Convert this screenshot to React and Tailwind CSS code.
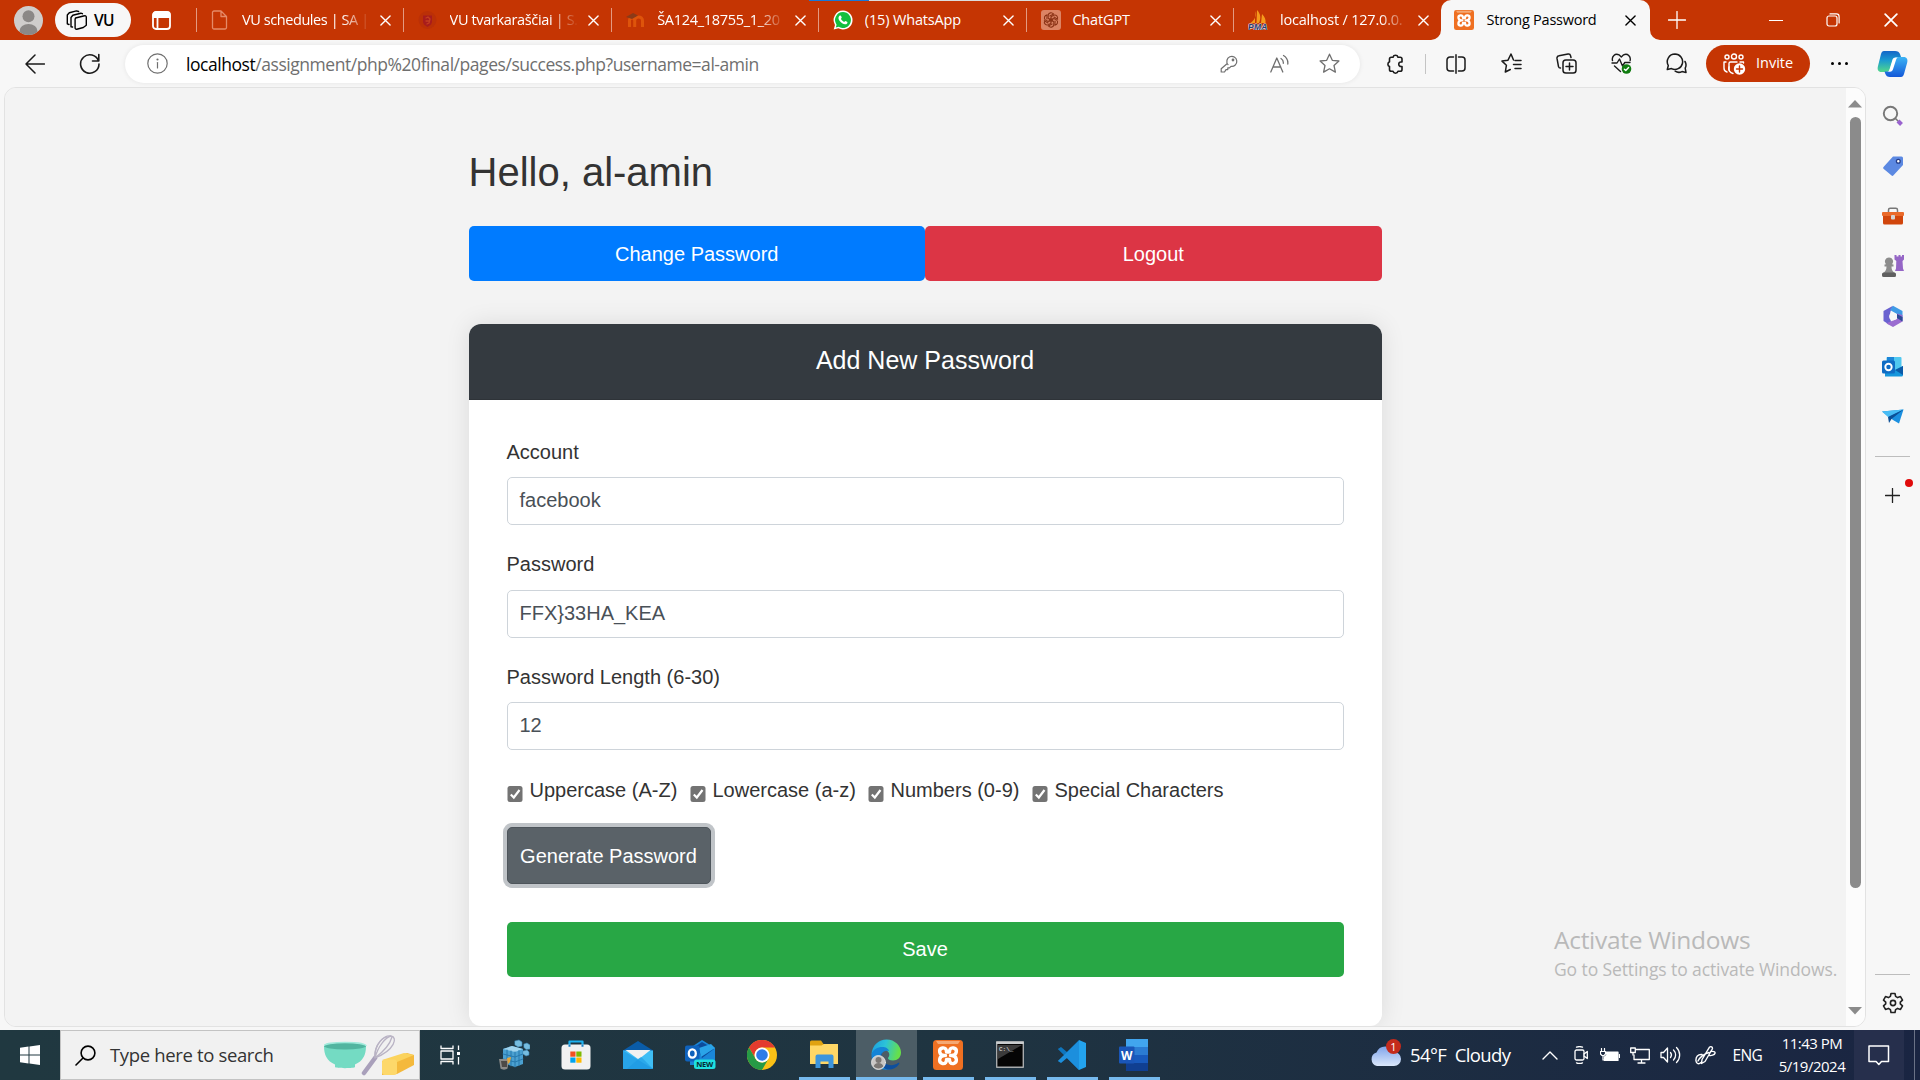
import React from "react";

const UI = "font-['Open_Sans','Noto_Sans',sans-serif]";

/* Generic inline drawing */
function Ico({ w = 20, h = w, vb, children, className = "", sw = 1.3 }) {
  return (
    <svg
      width={w}
      height={h}
      viewBox={vb || `0 0 ${w} ${h}`}
      fill="none"
      stroke="currentColor"
      strokeWidth={sw}
      strokeLinecap="round"
      strokeLinejoin="round"
      className={`shrink-0 ${className}`}
    >
      {children}
    </svg>
  );
}

/* ---------- Tab strip ---------- */
const PageIcon = () => (
  <Ico w={17} h={20} className="text-[#e58a68]">
    <path d="M1.5 2.5a1.5 1.5 0 0 1 1.5-1.5h7l5.5 5.5v11a1.5 1.5 0 0 1-1.5 1.5h-11a1.5 1.5 0 0 1-1.5-1.5zM10 1v5.5h5.500" />
  </Ico>
);
const ShieldIcon = () => (
  <Ico w={19} h={20} className="text-[#b02c10]">
    <circle cx="9.500" cy="10" r="9" fill="#bb3007" stroke="none" />
    <path d="M5 5.500h9v6c0 2.500-2 4-4.500 5.500-2.500-1.500-4.500-3-4.500-5.500z" fill="#a81c1c" stroke="none" />
    <path d="M8 8l2-1 2 2-1 4-2 1M8 11h3" stroke="#c43e20" />
  </Ico>
);
const MoodleIcon = () => (
  <Ico w={19} h={20}>
    <path d="M3.500 17v-6.500a2.600 2.600 0 0 1 5.200 0V17M8.700 10.500a3.800 3.500 0 0 1 7.800 0V17" stroke="#de540b" strokeWidth="3" strokeLinecap="butt" />
    <path d="M0 7l7-4 5 2.500-6 3.500z" fill="#8a3a18" stroke="none" />
  </Ico>
);
const WhatsAppIcon = () => (
  <Ico w={20} h={20}>
    <path d="M10 .5a9.500 9.500 0 1 1-4.600 17.800L.7 19.500l1.300-4.600A9.500 9.500 0 0 1 10 .5z" fill="#fff" stroke="none" />
    <path d="M10 2a8 8 0 1 1-4.300 14.800l-2.900.8.8-2.900A8 8 0 0 1 10 2z" fill="#12bf3f" stroke="none" />
    <path d="M6.800 5.600c.7-.4 1.200 0 1.400.6l.5 1.200c.1.500-.6 1-.8 1.400.6 1.400 1.700 2.500 3.200 3.100.4-.2.9-1.100 1.400-1l1.500.8c.7.400.5 1.200.1 1.700-1.200 1.500-3.300 1-5-.1-1.600-1-3-2.500-3.500-4.200-.3-1.500.1-2.800 1.200-3.500z" fill="#fff" stroke="none" />
  </Ico>
);
const Knot = ({ color }) => (
  <g stroke={color} strokeWidth="1.100" fill="none">
    {[0, 60, 120, 180, 240, 300].map((a) => (
      <path key={a} transform={`rotate(${a} 10 10)`} d="M7.200 8.300V5.400a2.800 2.800 0 0 1 5.200-1.200M7.200 8.300l4.500 2.500M8.900 5.900l3.800-2" />
    ))}
  </g>
);
const ChatGptIcon = () => (
  <Ico w={20} h={20}>
    <rect width="20" height="20" rx="3" fill="#dc8464" stroke="none" />
    <Knot color="#8c3417" />
  </Ico>
);
const PmaIcon = () => (
  <Ico w={20} h={20}>
    <path d="M7 1c1 4 1 8-4.500 12H7zM9 0c4 4 4 9 2 13H8.500zM14 4c3 3 4 6 3.500 9H13z" fill="#f59a1c" stroke="none" />
    <text x="0" y="19.500" fontSize="8.500" fontWeight="700" fontStyle="italic" fontFamily="Liberation Sans" textLength="19.500" fill="#2d3a72" stroke="#e3d3cf" strokeWidth="1.200" paintOrder="stroke">PMA</text>
  </Ico>
);
const XamppIcon = ({ w = 20, h = 20 }) => (
  <Ico w={w} h={h} vb="0 0 30 30">
    <rect width="30" height="30" rx="3.500" fill="#ef7022" stroke="none" />
    <path d="M3 1h24l-2 3H5z" fill="#f5a873" stroke="none" />
    <path d="M12.500 15.500H11c-5-.5-6-6.500-1.500-7.500 3-.5 4 1.500 4 4h3c0-2.500 1-4.500 4-4 4.500 1 3.500 7-1.500 7.500 5 .5 6 7 1.500 8-3 .5-4-1.500-4-4h-3c0 2.500-1 4.500-4 4-4.500-1-3.500-7.500 1.500-8M17.500 15.500H19" stroke="#fff" strokeWidth="3.400" />
  </Ico>
);
const Cross = ({ s = 11, className = "" }) => (
  <Ico w={s} vb="0 0 12 12" className={className} sw={1.500}>
    <path d="M1 1l10 10M11 1L1 11" />
  </Ico>
);

const TABS = [
  { icon: <PageIcon />, title: "VU schedules | SA |", fade: true, cls: "tracking-[-0.42px]" },
  { icon: <ShieldIcon />, title: "VU tvarkaraščiai | S.", fade: true, cls: "tracking-[-0.35px]" },
  { icon: <MoodleIcon />, title: "ŠA124_18755_1_20", fade: true, cls: "tracking-[-0.3px]" },
  { icon: <WhatsAppIcon />, title: "(15) WhatsApp", cls: "tracking-[-0.15px]" },
  { icon: <ChatGptIcon />, title: "ChatGPT", cls: "tracking-[-0.15px]" },
  { icon: <PmaIcon />, title: "localhost / 127.0.0.", fade: true, cls: "tracking-[-0.2px]" },
];

function TabStrip() {
  return (
    <div className="relative flex h-10 shrink-0 items-center bg-[#c53503] text-white">
      <svg width="29" height="29" viewBox="0 0 29 29" className="ml-[13.500px] shrink-0">
        <defs><clipPath id="av"><circle cx="14.500" cy="14.500" r="14.500" /></clipPath></defs>
        <g clipPath="url(#av)">
          <rect width="29" height="29" fill="#cfcdcb" />
          <circle cx="14.500" cy="10.300" r="6" fill="#8b8886" />
          <ellipse cx="14.500" cy="25" rx="9" ry="7" fill="#8b8886" />
        </g>
      </svg>
      <div className="ml-[12.500px] flex h-[34px] w-[75.500px] shrink-0 items-center rounded-full bg-[#f7f7f7] pl-[11px] text-black">
        <Ico w={22} h={20} sw={1.400}>
          <path d="M9.500 8l9-2.200a1.300 1.300 0 0 1 1.800 1.300v8.200l-3 2.200-6.500 1.700a1.300 1.300 0 0 1-1.700-1.300V9.300z" />
          <path d="M6.500 17l-1.500-.3V7.500l1.800-2.200 8-2.100 1.600.5" />
          <path d="M3 14.500l-1.700-.7V5l2-2.300L10.500.9l2.100.6" />
        </Ico>
        <span className="ml-[6px] text-[15.500px] font-semibold leading-5 tracking-[-0.6px]">VU</span>
      </div>
      <Ico w={19} h={19} className="ml-[21px]" sw={1.800}>
        <rect x="1" y="1" width="17" height="17" rx="3" />
        <path d="M1.500 3.500a2 2 0 0 1 2-2h12a2 2 0 0 1 2 2V6h-16z" fill="currentColor" />
        <path d="M5.500 6v12" />
      </Ico>
      <div className="ml-[25px] flex">
        {TABS.map((t) => (
          <div key={t.title} className="flex h-6 w-[207.600px] items-center border-l border-[#e39a81] pl-[14px]">
            <div className="flex w-[31.500px] shrink-0">{t.icon}</div>
            <div className={`w-[128px] overflow-hidden whitespace-nowrap text-[14.500px] leading-5 ${t.cls} ${t.fade ? "[mask-image:linear-gradient(90deg,#000_78%,transparent)]" : ""}`}>
              {t.title}
            </div>
            <Cross className="ml-[10px]" />
          </div>
        ))}
      </div>
      <div className="relative flex h-10 w-[209px] shrink-0 items-center rounded-t-[10px] bg-[#f7f7f7] pl-[13px] text-black">
        <svg width="10" height="10" className="absolute bottom-0 -left-[10px]"><path d="M10 0v10H0A10 10 0 0 0 10 0z" fill="#f7f7f7" /></svg>
        <svg width="10" height="10" className="absolute bottom-0 -right-[10px]"><path d="M0 0v10h10A10 10 0 0 1 0 0z" fill="#f7f7f7" /></svg>
        <XamppIcon />
        <span className="ml-[12.500px] w-[128px] whitespace-nowrap text-[14.500px] leading-5 tracking-[-0.25px]">Strong Password</span>
        <Cross className="ml-[10px]" />
      </div>
      <Ico w={18} className="ml-[17.500px]" sw={1.300}><path d="M9 .5v17M.5 9h17" /></Ico>
      <Ico w={14} className="ml-[83.500px]" sw={1.200}><path d="M.5 7.500h13" /></Ico>
      <Ico w={14} className="ml-[42.500px]" sw={1.200}>
        <rect x="1" y="3" width="10" height="10" rx="2" />
        <path d="M4 .9h6.500A2.600 2.600 0 0 1 13.100 3.500V10" />
      </Ico>
      <Cross s={14} className="ml-[44px]" />
      <div className="absolute left-[809px] top-0 flex h-px">
        <div className="w-[60px] bg-[#1877d8]" />
        <div className="w-[241px] bg-[#dcdcdc]" />
      </div>
    </div>
  );
}

/* ---------- Address bar ---------- */
function Toolbar() {
  return (
    <div className="flex h-[47px] shrink-0 items-center bg-[#f7f7f7] text-[#1b1b1b]">
      <Ico w={20} className="ml-[25px]" sw={1.500}><path d="M10 1L1 10l9 9M1 10h18.500" /></Ico>
      <Ico w={22} className="ml-[34px]" sw={1.600}>
        <path d="M19.500 8A9.200 9.200 0 1 0 20 11M19.800 1.500V8h-6.300" />
      </Ico>
      <div className="ml-6 flex h-[38px] w-[1235px] shrink-0 items-center rounded-full bg-white pl-[22px] text-[#6f6f6f] shadow-[0_0_5px_rgba(0,0,0,0.08)]">
        <Ico w={21} sw={1.200}><circle cx="10.500" cy="10.500" r="9.700" /><path d="M10.500 9.500v5.500" /><circle cx="10.500" cy="6.500" r=".5" fill="currentColor" /></Ico>
        <span className="ml-[18px] w-[1034px] shrink-0 whitespace-nowrap text-[17.500px] leading-6 tracking-[-0.45px]">
          <span className="text-black">localhost</span>/assignment/php%20final/pages/success.php?username=al-amin
        </span>
        <Ico w={18} sw={1.200}>
          <path d="M8 9.600a5 5 0 1 1 3 1.700L9.500 12.800H7.800v1.800H6L4.500 17H1.200v-3.200L7.300 8.500" />
          <circle cx="13" cy="5" r=".8" fill="currentColor" />
        </Ico>
        <Ico w={19} h={20} className="ml-[32px]" sw={1.300}>
          <path d="M.8 18L6.800 4l6 14M3 13h7.800M11 4.500a5 5 0 0 1 2.300 4.800M13.500 1.500a9 9 0 0 1 4.300 8.500" />
        </Ico>
        <Ico w={21} className="ml-[29.500px]" sw={1.300}>
          <path d="M10.500 1.200l2.800 6.100 6.600.7-4.900 4.500 1.400 6.600-5.900-3.300-5.900 3.300L6 12.500 1.100 8l6.600-.7z" />
        </Ico>
      </div>
      <Ico w={20} className="ml-[25px]" sw={1.600}>
        <path d="M4.500 5A1.800 1.800 0 0 1 6.300 3.200H8a2.600 2.600 0 0 1 5 0h2.200A1.800 1.800 0 0 1 17 5v3h-1a2 2 0 0 0 0 4.500h1v3a1.800 1.800 0 0 1-1.800 1.800H13a2.600 2.600 0 0 1-5 0H6.300a1.800 1.800 0 0 1-1.800-1.800V12.600a2.600 2.600 0 0 1 0-4.800z" />
      </Ico>
      <div className="ml-[20px] h-5 w-px bg-[#c4c4c4]" />
      <Ico w={20} className="ml-[20px]" sw={1.500}>
        <path d="M7.500 3H4a3 3 0 0 0-3 3v8a3 3 0 0 0 3 3h3.500M12.500 3H16a3 3 0 0 1 3 3v8a3 3 0 0 1-3 3h-3.500M10 .8v18.400" />
      </Ico>
      <Ico w={21} className="ml-[35px]" sw={1.500}>
        <path d="M12.500 7L10 1 7 7.200l-6 .9 4.400 4.200L4.300 19l5-2.500M14 7.500h6M12.500 11.500H20M14 15.500h6" />
      </Ico>
      <Ico w={21} className="ml-[34px]" sw={1.500}>
        <rect x="7" y="7" width="13" height="13" rx="2.800" />
        <path d="M13.500 10v7M10 13.500h7M15 4.500l-.4-1.700A2.300 2.300 0 0 0 12 1L3 2.800A2.300 2.300 0 0 0 1 5.400l1.500 8.200A2 2 0 0 0 4.500 15" />
      </Ico>
      <Ico w={21} className="ml-[34px]" sw={1.400}>
        <path d="M1.500 7.500C.5 3.500 4-.2 8 1.800L10.300 4l2.300-2.200c4-2 7.500 1.700 6.500 5.700M1 10h5l2.500-4 3 7 2.300-3.500H19M3.500 13l6 5.500" />
        <circle cx="15.500" cy="16" r="4.800" fill="#107c10" stroke="none" />
        <path d="M13.400 16.200l1.400 1.400 2.800-3" stroke="#fff" />
      </Ico>
      <Ico w={21} className="ml-[34px]" sw={1.500}>
        <path d="M9 1a7.700 7.700 0 1 1-3.500 14.600L1.300 16.500l1-4A7.700 7.700 0 0 1 9 1z" />
        <path d="M19 8.500c1.400 2.300 1.300 4.500.2 6.700l.8 4.300-4-.9c-2.500 1.200-5 .8-6.800-.4" />
      </Ico>
      <div className="ml-[19px] flex h-[37px] w-[104px] shrink-0 items-center rounded-full bg-[#c53503] pl-[17px] text-white">
        <Ico w={23} h={22} sw={1.400}>
          <circle cx="4" cy="4" r="2" /><circle cx="11" cy="3.500" r="2.500" /><circle cx="18" cy="4" r="2" />
          <path d="M1 9v6a4 4 0 0 0 3 4M6 17V10.500A1.500 1.500 0 0 1 7.500 9h6.500M17 9h3.500v1M1 9h2" />
          <path d="M6 14a5 5 0 0 0 4 6.500" />
          <circle cx="16.500" cy="16" r="5.700" fill="#fff" stroke="none" />
          <path d="M16.500 13v6M13.500 16h6" stroke="#c53503" />
        </Ico>
        <span className="ml-[10px] -mt-px text-[14.500px] leading-5">Invite</span>
      </div>
      <div className="ml-[21px] flex w-[17px] shrink-0 justify-between">
        {[0, 1, 2].map((i) => <span key={i} className="h-[3px] w-[3px] rounded-full bg-black" />)}
      </div>
      <svg width="31" height="28" viewBox="0 0 31 28" className="ml-[29px] shrink-0">
        <defs>
          <linearGradient id="cpA" x1="0" y1="0" x2="0" y2="1"><stop offset="0" stopColor="#1466c8" /><stop offset=".45" stopColor="#1b9bd0" /><stop offset="1" stopColor="#52d88a" /></linearGradient>
          <linearGradient id="cpB" x1="0" y1="0" x2="0" y2="1"><stop offset="0" stopColor="#3cb4f5" /><stop offset="1" stopColor="#1458d8" /></linearGradient>
        </defs>
        <path d="M7 1h11c2.500 0 4.500 1 5.200 3.500l1.300 4h-5c-2 0-3.500 1-4 3l-2.500 7.500c-.6 2-2 3-4 3H4.500C1 22 0 19.500 1 16L4 4C4.600 2 5.500 1 7 1z" fill="url(#cpA)" />
        <path d="M24 27H13c-2.500 0-4-1-4.800-3.500L7.500 21.500H10c2 0 3-1 3.500-3L16 10.500c.6-2 2-3.500 4-3.500h6.500c3.500 0 4.500 2.500 3.700 5.500L27 24c-.6 2-1.500 3-3 3z" fill="url(#cpB)" />
        <path d="M15.500 9.500l-3 10c-.4 1.300-1 2-2 2.200H13c1.800 0 2.500-1 3-2.500L19 10c.3-1 .8-2 1.800-2.500h-2.300c-1.500 0-2.500.7-3 2z" fill="#fff" />
      </svg>
    </div>
  );
}

/* ---------- Web page ---------- */
const Field = ({ label, value }) => (
  <div className="h-[112.500px]">
    <div className="h-[30px] text-[20px] leading-[28px]">{label}</div>
    <div className="mt-[9.500px] h-[48px] rounded-[5px] border border-[#ced4da] bg-white px-[12px] text-[20px] leading-[44px] text-[#495057]">{value}</div>
  </div>
);

const Check = ({ label, className }) => (
  <div className={`flex shrink-0 ${className}`}>
    <svg width="16" height="16" viewBox="0 0 16 16" className="mt-[11px] shrink-0">
      <rect x=".5" y="0" width="15" height="16" rx="2.500" fill="#737373" />
      <path d="M3.800 8.500l3 3 5.700-7.500" fill="none" stroke="#fff" strokeWidth="2.200" />
    </svg>
    <span className="ml-[7px] whitespace-nowrap">{label}</span>
  </div>
);

function Page() {
  return (
    <div className="flex min-w-0 flex-1 justify-center bg-[#f3f3f3] pt-[60px] font-['Liberation_Sans',Arial,sans-serif] text-[#333]">
      <div className="mr-px flex w-[913px] flex-col">
        <h1 className="text-[40px] font-normal leading-[48px]">Hello, al-amin</h1>
        <div className="mt-[30px] flex h-[55px] text-center text-[20px] leading-[56px] text-white">
          <div className="flex-1 rounded-[5px] bg-[#007bff]">Change Password</div>
          <div className="flex-1 rounded-[5px] bg-[#dc3545]">Logout</div>
        </div>
        <div className="mt-[43px] h-[702px] overflow-hidden rounded-[12px] bg-white shadow-[0_0_25px_rgba(0,0,0,0.1)]">
          <div className="h-[76px] border-b border-[#2e3338] bg-[#343a40] pt-[21px] text-center text-[25px] leading-[30px] text-white">Add New Password</div>
          <div className="px-[38px] pt-[37.500px]">
            <Field label="Account" value="facebook" />
            <Field label="Password" value="FFX}33HA_KEA" />
            <Field label="Password Length (6-30)" value="12" />
            <div className="flex h-[30px] text-[20px] leading-[30px]">
              <Check label="Uppercase (A-Z)" className="w-[183px]" />
              <Check label="Lowercase (a-z)" className="w-[178px]" />
              <Check label="Numbers (0-9)" className="w-[164px]" />
              <Check label="Special Characters" className="" />
            </div>
            <div className="mt-[22px] h-[57px] w-[204px] rounded-[5px] border border-[#4e555b] bg-[#5a6268] text-center text-[20px] leading-[56px] text-white shadow-[0_0_0_4px_rgba(130,138,145,0.5)]">Generate Password</div>
            <div className="mt-[38px] h-[55px] rounded-[5px] bg-[#28a745] text-center text-[20px] leading-[54px] text-white">Save</div>
          </div>
        </div>
      </div>
    </div>
  );
}

function Scrollbar() {
  return (
    <div className="flex w-[19px] shrink-0 flex-col items-center bg-[#fcfcfc] pr-px">
      <svg width="14" height="8" className="mt-[12px] shrink-0"><path d="M7 0l7 7.500H0z" fill="#8b8b8b" /></svg>
      <div className="mt-[9px] h-[771px] w-[11px] shrink-0 rounded-full bg-[#8b8b8b]" />
      <svg width="14" height="8" className="mt-[119px] shrink-0"><path d="M7 7.500L0 0h14z" fill="#8b8b8b" /></svg>
    </div>
  );
}

function Sidebar() {
  const slot = "flex h-[50px] w-full items-center justify-center";
  return (
    <div className="flex w-[53px] shrink-0 flex-col items-center text-[#222]">
      <div className={`${slot} mt-[4px]`}>
        <Ico w={22}>
          <circle cx="8.500" cy="8.500" r="6.700" stroke="#777" strokeWidth="1.900" />
          <path d="M13.500 13.500l2.500 2.500" stroke="#777" strokeWidth="1.500" />
          <path d="M16 16l3.500 3.500" stroke="#9a63cf" strokeWidth="4" strokeLinecap="butt" />
        </Ico>
      </div>
      <div className={slot}>
        <Ico w={22}>
          <path d="M1.500 12L11 1.500h8.500A1.500 1.500 0 0 1 21 3v7L11.500 20.300a1.500 1.500 0 0 1-2.200 0l-7.800-6.500a1.300 1.300 0 0 1 0-1.800z" fill="#5c89e2" stroke="none" />
          <circle cx="16.300" cy="6.200" r="1.900" fill="#fff" stroke="#243c88" strokeWidth="1.300" />
        </Ico>
      </div>
      <div className={slot}>
        <Ico w={22} h={18}>
          <path d="M6.500 5V3A1.700 1.700 0 0 1 8.200 1.300h5.600A1.700 1.700 0 0 1 15.500 3v2" stroke="#777" strokeWidth="1.500" />
          <rect x="1" y="6" width="20" height="11.500" rx="1.500" fill="#d1460c" stroke="none" />
          <rect x="0" y="5" width="22" height="4" rx="1" fill="#ea6a2a" stroke="none" />
          <rect x="9" y="8" width="4" height="4.500" rx="1" fill="#d4d4d4" stroke="none" />
        </Ico>
      </div>
      <div className={slot}>
        <Ico w={22} h={22}>
          <path d="M12.500 0h2v1.500h2V0h2v1.500h1.500V0h2v4.500L20.500 6l.5 7.500 1 2.500h-9l1-2.500.3-7.500-1.800-1.500z" fill="#9566c6" stroke="none" />
          <path d="M7 2.500a4 4 0 0 1 3 6.700l1.500.3v2h-2c0 3 .8 4.500 2.500 6 2.500.500 2.500 4 1 4.500H1.200c-2-.5-1.500-4 .8-4.500 1.700-1.500 2.500-3 2.500-6h-2v-2L4 9.200A4 4 0 0 1 7 2.500z" fill="#8c8c8c" stroke="none" />
          <rect x="0" y="17.500" width="14" height="4.500" rx="2" fill="#606060" stroke="none" />
        </Ico>
      </div>
      <div className={slot}>
        <Ico w={22} h={23}>
          <path d="M11 .8L1.500 6v10l5.500 3.500 2-3-1.500-5 1-5z" fill="#6a62d0" stroke="none" />
          <path d="M11 .8L20.500 6v10L15 13V9L8 5z" fill="#3f9be6" stroke="none" />
          <path d="M15 8.500V14l-9 3.500L4.500 18.500 11 22l9.500-5.500V10z" fill="#9a6cd0" stroke="none" />
          <path d="M15 9l5.500 3v4.500L15 13z" fill="#2e4a96" stroke="none" />
          <circle cx="11" cy="11.500" r="3.800" fill="#f7f7f7" stroke="none" />
        </Ico>
      </div>
      <div className={slot}>
        <Ico w={21} h={21}>
          <rect x="4.500" y="1" width="15" height="18" rx="1" fill="#50c8f0" stroke="none" />
          <rect x="5" y="1" width="7" height="6" fill="#1c86d8" stroke="none" />
          <path d="M3 20.500V12l8 3 10-5v9a1.500 1.500 0 0 1-1.500 1.500z" fill="#1596dc" stroke="none" />
          <path d="M13 14l8-4v9z" fill="#0a5aa8" stroke="none" />
          <rect x="0" y="4.500" width="13" height="13" rx="1.500" fill="#0f6cc4" stroke="none" />
          <circle cx="6.500" cy="11" r="3.200" stroke="#fff" strokeWidth="1.900" />
        </Ico>
      </div>
      <div className={`${slot} pt-[2px]`}>
        <Ico w={22} h={16}>
          <path d="M0 2.500L21.500.5 17 14.500l-6-3.500z" fill="#1a8fe0" stroke="none" />
          <path d="M0 2.500L21.500.5 6 8z" fill="#49bdf5" stroke="none" />
          <path d="M6 8L21.500.5 9.500 10 7 14z" fill="#0c4f96" stroke="none" />
        </Ico>
      </div>
      <div className="mt-[15px] h-px w-[35px] shrink-0 bg-[#bdbdbd]" />
      <div className="relative mt-[31px]">
        <Ico w={15} sw={1.300}><path d="M7.500.5v14M.5 7.500h14" /></Ico>
        <span className="absolute -top-[9px] left-[20px] h-2 w-2 rounded-full bg-[#e00b0b]" />
      </div>
      <div className="mt-auto h-px w-[35px] shrink-0 bg-[#bdbdbd]" />
      <Ico w={22} className="mb-[16px] mt-[17px]" vb="0 0 22 22" sw={1.600}>
        <path d="M9 1.500h4l.6 2.900 2 1.200 2.900-1 2 3.500-2.200 2v1.800l2.200 2-2 3.500-2.900-1-2 1.200-.6 2.900H9l-.6-2.900-2-1.200-2.900 1-2-3.500 2.200-2v-1.800l-2.200-2 2-3.500 2.900 1 2-1.200z" />
        <circle cx="11" cy="11" r="2.600" />
      </Ico>
    </div>
  );
}

/* ---------- Taskbar ---------- */
const RegIcon = () => (
  <Ico w={31} h={31}>
    <path d="M4 10l9-3 11 3v15l-8 3-12-4z" fill="#4aa0d0" stroke="none" />
    <path d="M4 10l9-3 11 3-8 3z" fill="#9fd4ee" stroke="none" />
    <path d="M4 15l12 3 8-3M4 20l12 3 8-3M8 11v14M12 12v15M16 13v15M20 11.500v15" stroke="#2474a8" strokeWidth=".9" />
    <path d="M16 2l4-1 3 2v4l-4 1-3-2zM25 5l3-1 3 2v4l-4 .5-2-2zM24 12l4-1 2 2v3l-3 1-3-2z" fill="#76bde0" stroke="#3c86b4" strokeWidth=".6" />
    <path d="M0 20h10l-1.500 9.500c-1.500 1.500-5.500 1.500-7 0z" fill="#8b8b88" stroke="none" />
    <path d="M2 22h6v6H3z" fill="#4d4a46" stroke="none" />
    <path d="M8 19l4-1-1 5-2 2z" fill="#e4a73b" stroke="none" />
  </Ico>
);
const StoreIcon = () => (
  <Ico w={30} h={30}>
    <path d="M8.500 7V1.500h13V7" stroke="#1db2f0" strokeWidth="2.200" strokeLinecap="butt" />
    <rect x=".5" y="4.500" width="29" height="25" rx="3.500" fill="#f1f1f1" stroke="none" />
    <path d="M8.500 4.500v2.200M21.500 4.500v2.200" stroke="#1580c8" strokeWidth="2" strokeLinecap="butt" />
    <g stroke="none"><rect x="9.300" y="11.500" width="5.200" height="5.200" fill="#f25022" /><rect x="15.300" y="11.500" width="5.200" height="5.200" fill="#7fba00" /><rect x="9.300" y="17.500" width="5.200" height="5.200" fill="#00a4ef" /><rect x="15.300" y="17.500" width="5.200" height="5.200" fill="#ffb900" /></g>
  </Ico>
);
const MailIcon = () => (
  <Ico w={30} h={28}>
    <g stroke="none"><path d="M0 9.500L15 0l15 9.500V12H0z" fill="#0a5ca8" /><path d="M0 9.500h30V27a1 1 0 0 1-1 1H1a1 1 0 0 1-1-1z" fill="#3fbef5" /><path d="M2.500 9h25L18 16.500 15 18z" fill="#f1f1f1" /><path d="M0 9.500L30 28H1a1 1 0 0 1-1-1z" fill="#28a4e8" /><path d="M18 15.800L30 28H4z" fill="#1c98e0" opacity=".55" /></g>
  </Ico>
);
const OutlookNew = () => (
  <Ico w={31} h={29}>
    <g stroke="none">
      <path d="M5 8L17 0l13 8v14a3 3 0 0 1-3 3H5z" fill="#1a86d8" /><path d="M11 6l6-4 12 7-12 9z" fill="#0c4c9c" /><path d="M14 8L26 4l4 4-14 9z" fill="#2aa4e8" />
      <rect y="5.500" width="14.500" height="16" rx="2" fill="#0f62bc" />
    </g>
    <ellipse cx="7.300" cy="13.500" rx="3.500" ry="4.200" stroke="#fff" strokeWidth="2.300" />
    <rect x="9" y="19.500" width="21.500" height="9.500" rx="2.500" fill="#1fe0e0" stroke="none" />
    <text x="11.300" y="27" fontSize="7.500" fontWeight="700" fontFamily="Open Sans" textLength="17" fill="#062a33" stroke="none">NEW</text>
  </Ico>
);
const ChromeIcon = () => (
  <Ico w={30} h={30}>
    <g stroke="none">
      <circle cx="15" cy="15" r="15" fill="#fbc116" />
      <path d="M2 7.500A15 15 0 0 1 28 7.500H15a7.500 7.500 0 0 0-6.500 11.200z" fill="#e33b2e" />
      <path d="M2 7.500A15 15 0 0 0 15 30l6.500-11.300a7.500 7.500 0 0 1-13 0z" fill="#269a46" />
      <circle cx="15" cy="15" r="7.500" fill="#fff" /><circle cx="15" cy="15" r="5.800" fill="#2e7be8" />
    </g>
  </Ico>
);
const FolderIcon = () => (
  <Ico w={28} h={29}>
    <g stroke="none"><path d="M0 2a1.500 1.500 0 0 1 1.500-1.500H11L13.500 4H28v20H0z" fill="#e0a210" /><path d="M0 5.500h11.500L14 4h14v20H0z" fill="#ffd766" /><path d="M5.500 28V16.500A2 2 0 0 1 7.500 14.500h14a2 2 0 0 1 2 2V28h-5v-6.500h-8V28z" fill="#3d95dc" /></g>
  </Ico>
);
const EdgeIcon = () => (
  <Ico w={32} h={31}>
    <defs><linearGradient id="edg" x1="0" y1="0" x2="1" y2=".2"><stop offset="0" stopColor="#1b9de0" /><stop offset=".5" stopColor="#2cc3d8" /><stop offset="1" stopColor="#66e04a" /></linearGradient></defs>
    <g stroke="none">
      <path d="M1.500 15.500C2 6 9 .5 16.500.5 25 .5 31 7 31 13.500c0 5-3.500 8-8 8-3.500 0-5-1-5-2.200 0-1 1.300-1.500 1.300-3.800 0-2.800-3-5-6.800-5-5 0-10 2.500-11 5z" fill="url(#edg)" />
      <path d="M1.500 15.500c1-5 6-7.500 11-7.500 3 0 6 1.500 6.500 4-5-1.500-9 2.500-8 8.500 1 5 5 8.500 10 9.500C9 33 1 25 1.500 15.500z" fill="#1484d6" />
      <path d="M12.500 13c-2 3-1.500 8.500 3 11.500 4 2.500 9 2 12.500-.5 1-.5 1.700.3 1.200 1-3 4.500-7.500 6-12 5.500-7-1.500-10-11-4.700-17.500z" fill="#0d4f9e" />
    </g>
    <circle cx="8.500" cy="23.500" r="7" fill="#c9c7c5" stroke="#e8e8e8" strokeWidth=".8" />
    <g stroke="none" fill="#7b7875"><circle cx="8.500" cy="21" r="3" /><path d="M3.800 27.500a4.700 3.500 0 0 1 9.400 0 6.500 6.500 0 0 1-9.400 0z" /></g>
  </Ico>
);
const CmdIcon = () => (
  <Ico w={28} h={27}>
    <rect x=".7" y=".7" width="26.600" height="25.600" fill="#050505" stroke="#a8abad" strokeWidth="1.400" />
    <path d="M1 2h26" stroke="#c9ccce" strokeWidth="2" />
    <path d="M2 4h24L2 18z" fill="#3b3b3b" stroke="none" />
    <text x="3" y="10" fontSize="6" fontFamily="Liberation Mono" fill="#eee" stroke="none">C:\_</text>
  </Ico>
);
const CodeIcon = () => (
  <Ico w={30} h={30}>
    <g stroke="none"><path d="M22 0l7 3v24l-7 3z" fill="#23a3ee" /><path d="M22 0L10 12 4 7 .8 9l20.700 20.500.5.5V21.500z" fill="#0f75bd" /><path d="M22 30L10 18l-6 5-3.200-2L22 .5V8.500z" fill="#1c8fdd" /></g>
  </Ico>
);
const WordIcon = () => (
  <Ico w={30} h={32}>
    <g stroke="none"><path d="M7 0h22v8H7z" fill="#41a5ee" /><path d="M7 8h22v8H7z" fill="#2b7cd3" /><path d="M7 16h22v8H7z" fill="#185abd" /><path d="M7 24h22v8H7z" fill="#103f91" /><rect y="7.500" width="15.500" height="17" rx="1" fill="#1a56b8" /></g>
    <text x="2" y="20.500" fontSize="12" fontWeight="700" fontFamily="Open Sans" textLength="11.500" lengthAdjust="spacingAndGlyphs" fill="#fff" stroke="none">W</text>
  </Ico>
);

const APPS = [
  [<RegIcon />, "w-[62px]", ""],
  [<StoreIcon />, "w-[61px]", ""],
  [<MailIcon />, "w-[63px]", ""],
  [<OutlookNew />, "w-[62px]", ""],
  [<ChromeIcon />, "w-[62px]", ""],
  [<FolderIcon />, "w-[62px]", "open"],
  [<EdgeIcon />, "w-[62px]", "active"],
  [<XamppIcon w={30} h={30} />, "w-[62px]", "open"],
  [<CmdIcon />, "w-[62px]", "open"],
  [<CodeIcon />, "w-[62px]", "open"],
  [<WordIcon />, "w-[62px]", "open"],
];

function Taskbar() {
  return (
    <div className="flex h-[50px] shrink-0 bg-linear-to-r from-[#203840] via-[#1f3441] to-[#1a2542] text-white">
      <div className="flex w-[60px] shrink-0 items-center justify-center">
        <svg width="20" height="20"><path d="M0 2.800l8.500-1.200v8H0zM9.500 1.400L20 0v9.600H9.500zM0 10.500h8.500v8L0 17.300zM9.500 10.500H20V20L9.500 18.600z" fill="#fff" /></svg>
      </div>
      <div className="flex w-[360px] shrink-0 items-center border border-[#c3c3c3] bg-[#f1f1f1] pl-[14px] text-[#333]">
        <Ico w={21} sw={1.600} className="text-black"><circle cx="13" cy="8" r="6.900" /><path d="M8 13L1 20" /></Ico>
        <span className="ml-[14px] w-[214px] whitespace-nowrap text-[18.500px] leading-7 tracking-[-0.35px]">Type here to search</span>
        <svg width="92" height="42" viewBox="0 0 92 42" className="shrink-0">
          <path d="M0 12c0 9 3 15 11 18.500V33c0 1.500 20 1.500 20 0v-2.500C39 27 42 21 42 12z" fill="#74dbc3" />
          <ellipse cx="21" cy="12" rx="21" ry="3.500" fill="#52b5a0" />
          <path d="M0 12a21 3.500 0 0 1 42 0" fill="none" stroke="#a0eadb" strokeWidth="1.500" />
          <path d="M51 24L40 39" stroke="#a9a0bb" strokeWidth="4.500" strokeLinecap="round" />
          <g fill="none" stroke="#b9b3c4" strokeWidth="1.300"><path d="M51 24C50 10 60 1 67 2s4 14-16 22z" /><path d="M51 24C54 12 62 3 67 2M51 24c8-6 15-14 17-21M51 24C50 14 56 5 63 2.500" /></g>
          <path d="M58 27l25-8 7 2v10l-17 9-15 1z" fill="#f4b93c" />
          <path d="M58 26l22-7 10 2-17 7z" fill="#fbd35c" />
          <rect x="58" y="25.500" width="15" height="15.500" rx="3" fill="#fdd86a" />
        </svg>
      </div>
      <div className="flex w-[60px] shrink-0 items-center justify-center">
        <Ico w={20} sw={1.300}>
          <path d="M1 .5V3.500h12V.5M1 19.500v-3h12v3M1 6h12v8H1zM18.500.5v4.500M18.500 12v7.500" strokeLinecap="butt" />
          <rect x="17" y="7" width="3" height="3" fill="currentColor" stroke="none" />
        </Ico>
      </div>
      <div className="ml-[3px] flex">
        {APPS.map(([icon, w, state], i) => (
          <div key={i} className={`flex shrink-0 flex-col items-center ${w}`}>
            <div className={`flex h-[47px] items-center justify-center pt-[2px] ${state === "active" ? "w-[61px] bg-[#4c5d66]" : "w-[51px]"}`}>{icon}</div>
            {state && <div className={`h-[3px] bg-[#76b9ed] ${state === "active" ? "w-[61px]" : "w-[51px]"}`} />}
          </div>
        ))}
      </div>
      <div className="ml-auto flex items-center">
        <svg width="32" height="30" viewBox="0 0 32 30" className="mb-[4px] shrink-0">
          <defs><linearGradient id="cl" x1="0" y1="0" x2="0" y2="1"><stop offset="0" stopColor="#7fa4ea" /><stop offset="1" stopColor="#dbe8fb" /></linearGradient></defs>
          <path d="M7 28a7 7 0 0 1-.5-13.500A9.500 9.500 0 0 1 24 14a7 7 0 0 1 0 14z" fill="url(#cl)" />
          <circle cx="23.500" cy="8.500" r="7.500" fill="#c42b1c" />
          <text x="23.500" y="12.500" fontSize="11" textAnchor="middle" fontFamily="Open Sans" fill="#fff">1</text>
        </svg>
        <span className="ml-[8px] w-[132px] whitespace-pre text-[18.500px] leading-6 tracking-[-0.6px]">54°F  Cloudy</span>
        <Ico w={16} h={9} sw={1.400}><path d="M1 8l7-7 7 7" /></Ico>
        <Ico w={14} h={18} className="ml-[16px]" sw={1.300}><rect x="1" y="4" width="9" height="10" rx="1.500" /><path d="M10 8l3.300-2.500v7L10 10M2.500 1.200c2-.8 4-.8 6 0M2.500 16.800c2 .8 4 .8 6 0" /></Ico>
        <Ico w={20} h={14} className="ml-[12px]" sw={1.200}><path d="M1.500.5v3M4.500.5v3M.5 3.500h5V6l-1.500 1.500h-2L.5 6zM3 7.500V12h2" /><path d="M6 4h12v8.500H4.500V9L7 7z" fill="currentColor" /><path d="M19.500 6.500v3" /></Ico>
        <Ico w={20} h={17} className="ml-[10px]" sw={1.300}><path d="M6 2.500h13.300v10H4V8M11.500 12.500V16M8 16h7" /><path d="M.7 1h4.600v4.500H.7zM3 5.500V8" /></Ico>
        <Ico w={21} h={18} className="ml-[10px]" sw={1.300}><path d="M1 6.500h2.500L7.500 2v14L3.500 11.500H1zM10.500 6.500a4 4 0 0 1 0 5M13.500 4a7 7 0 0 1 0 10M16.500 1.500a10.500 10.500 0 0 1 0 15" /></Ico>
        <Ico w={21} h={20} className="ml-[13.500px]" sw={1.400}><path d="M7 14.500L14.500 2.200a1.700 1.700 0 0 1 2.800 1.800L10 16.500l-3.500 2zM7 9.500C3 9 .5 12 1 16c.3 3 3 3.500 5 1.500M15.500 6.500c3-.5 5 .3 4.500 1.700-.5 1.800-4 2.800-5.500 2.300M3 16c1.500-3 6-7 11-8.500" /></Ico>
        <span className="ml-[17px] w-[32px] text-[15.500px] leading-5 tracking-[-0.7px]">ENG</span>
        <div className="ml-[5.500px] w-[84px] whitespace-nowrap text-center text-[15px] leading-[23px] tracking-[-0.5px]">
          <div>11:43 PM</div>
          <div>5/19/2024</div>
        </div>
        <div className="flex h-[50px] w-[50px] items-center justify-center bg-[#262f4c]">
          <Ico w={22} h={21} sw={1.500}><path d="M1 1h19.500v15.500H13.500l-2.700 3-2.700-3H1z" /></Ico>
        </div>
        <div className="ml-[10px] mr-[5px] h-[50px] w-px bg-[#6a7286]" />
      </div>
    </div>
  );
}

export default function App() {
  return (
    <div className={`relative flex h-[1080px] w-[1920px] flex-col overflow-hidden bg-[#f7f7f7] ${UI}`}>
      <TabStrip />
      <Toolbar />
      <div className="flex h-[943px] shrink-0">
        <div className="ml-[4px] flex h-[940px] w-[1862px] shrink-0 overflow-hidden rounded-[12px] border border-[#e2e2e2]">
          <Page />
          <Scrollbar />
        </div>
        <Sidebar />
      </div>
      <Taskbar />
      <div className="pointer-events-none absolute left-[1554px] top-[922px] whitespace-nowrap text-[#b9b9b9]">
        <div className="text-[24.500px] leading-9 tracking-[-0.3px]">Activate Windows</div>
        <div className="text-[17.500px] leading-[23px] tracking-[-0.1px]">Go to Settings to activate Windows.</div>
      </div>
    </div>
  );
}
